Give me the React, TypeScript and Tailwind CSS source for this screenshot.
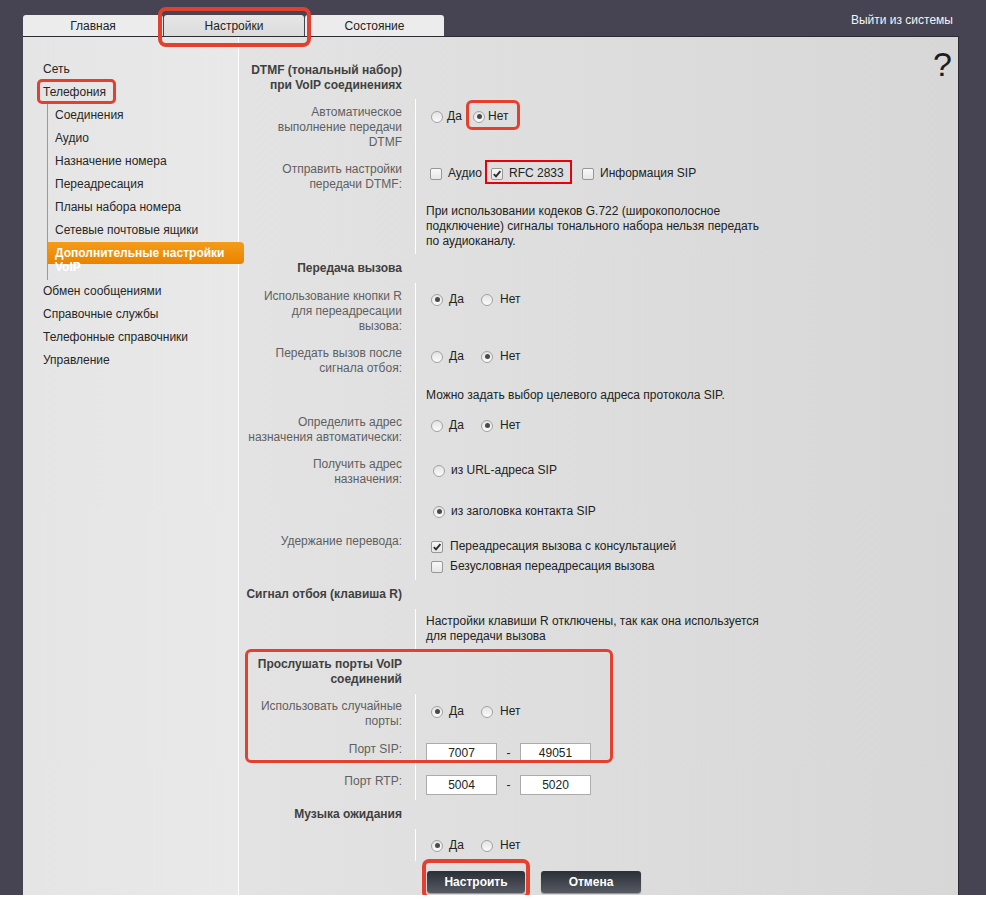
import React from "react";

function Radio({ checked = false }: { checked?: boolean }) {
  return (
    <span className="inline-flex w-[12px] h-[12px] shrink-0 items-center justify-center rounded-full border border-[#a2a2a2] bg-[linear-gradient(#e4e4e4,#fbfbfb)]">
      {checked ? <span className="block w-[5px] h-[5px] rounded-full bg-[#4a4a4a]" /> : null}
    </span>
  );
}

function Check({ checked = false }: { checked?: boolean }) {
  return (
    <span className="inline-flex w-[12px] h-[12px] shrink-0 items-center justify-center rounded-[2px] border border-[#979797] bg-[linear-gradient(#f8f8f8,#e6e6e6)]">
      {checked ? (
        <svg width="10" height="10" viewBox="0 0 10 10">
          <path d="M1.8 5.2 L4 7.4 L8.4 2.2" fill="none" stroke="#2d2d2d" strokeWidth="1.9" />
        </svg>
      ) : null}
    </span>
  );
}

function Row({
  label,
  labelCls = "",
  valueCls = "",
  rowCls = "",
  children,
}: {
  label?: React.ReactNode;
  labelCls?: string;
  valueCls?: string;
  rowCls?: string;
  children?: React.ReactNode;
}) {
  return (
    <div className={`flex ${rowCls}`}>
      <div className={`w-[176px] shrink-0 pr-[13px] text-right text-[#5f5f5f] leading-[15px] whitespace-nowrap ${labelCls}`}>
        {label}
      </div>
      <div className={`flex-1 border-l border-white pl-[10px] text-[#222] leading-[15px] ${valueCls}`}>{children}</div>
    </div>
  );
}

function Header({ children, cls }: { children: React.ReactNode; cls: string }) {
  return (
    <div className={`w-[176px] pr-[13px] text-right font-bold text-[#404040] leading-[15px] whitespace-nowrap ${cls}`}>
      {children}
    </div>
  );
}

function YesNo({ yes }: { yes: boolean }) {
  return (
    <div className="flex items-center h-[15px] ml-[5px]">
      <Radio checked={yes} />
      <span className="ml-[6px] w-[32px]">Да</span>
      <Radio checked={!yes} />
      <span className="ml-[7px]">Нет</span>
    </div>
  );
}

function PortInputs({ a, b }: { a: string; b: string }) {
  return (
    <div className="flex items-center">
      <div className="w-[71px] h-[20px] border border-[#ababab] bg-white text-center leading-[18px] text-[#222]">{a}</div>
      <span className="w-[23px] text-center">-</span>
      <div className="w-[71px] h-[20px] border border-[#ababab] bg-white text-center leading-[18px] text-[#222]">{b}</div>
    </div>
  );
}

export default function App() {
  const sub = ["Соединения", "Аудио", "Назначение номера", "Переадресация", "Планы набора номера", "Сетевые почтовые ящики"];
  const bottom = ["Обмен сообщениями", "Справочные службы", "Телефонные справочники", "Управление"];
  return (
    <div className="relative w-[986px] h-[895px] bg-[#464452] font-['Liberation_Sans',Arial,sans-serif] text-[12px] overflow-hidden">
      {/* top bar */}
      <div className="flex h-[36px] justify-between">
        <div className="flex items-end gap-[1px] pl-[23px]">
          <div className="w-[140px] h-[21px] rounded-t-[3px] bg-[#ececec] flex items-center justify-center text-[#222]">Главная</div>
          <div className="w-[140px] h-[21px] rounded-t-[3px] bg-[linear-gradient(#e6e6e6,#dcdcdc)] flex items-center justify-center text-[#222]">Настройки</div>
          <div className="w-[139px] h-[21px] rounded-t-[3px] bg-[#ececec] flex items-center justify-center text-[#222]">Состояние</div>
        </div>
        <div className="pt-[13px] pr-[33px] leading-[15px] text-[#f4f4f4]">Выйти из системы</div>
      </div>

      {/* panel */}
      <div className="ml-[23px] w-[936px] h-[859px] border-t border-r border-[#2c2b34] flex">
        {/* sidebar */}
        <div className="w-[216px] shrink-0 border-r border-white bg-[linear-gradient(to_right,#e5e5e5,#e9e9e9)] pt-[21px] text-[#262626]">
          <div className="h-[23px] leading-[23px] pl-[20px]">Сеть</div>
          <div className="h-[23px] leading-[23px] pl-[20px]">Телефония</div>
          <div className="ml-[24px] border-l border-[#9a9a9a]">
            {sub.map((s) => (
              <div key={s} className="h-[23px] leading-[23px] pl-[7px]">
                {s}
              </div>
            ))}
            <div className="h-[38px]">
              <div className="relative z-10 w-[196px] h-[22px] rounded-r-[4px] bg-[linear-gradient(#f59c1a,#e98300)] pl-[7px] pt-[4px] leading-[14px] font-bold text-white whitespace-nowrap">
                Дополнительные настройки
                <br />
                VoIP
              </div>
            </div>
          </div>
          {bottom.map((s) => (
            <div key={s} className="h-[23px] leading-[23px] pl-[20px]">
              {s}
            </div>
          ))}
        </div>

        {/* content */}
        <div className="flex-1 flex bg-[linear-gradient(to_right,#e3e3e3,#d7d7d7)]">
          <div className="flex-1">
            <Header cls="pt-[26px] pb-[6px]">
              DTMF (тональный набор)
              <br />
              при VoIP соединениях
            </Header>
            <Row
              label={<>Автоматическое<br />выполнение передачи<br />DTMF</>}
              labelCls="pt-[6px] pb-[6px]"
              valueCls="pt-[10px]"
            >
              <div className="flex items-center h-[15px] ml-[5px]">
                <Radio />
                <span className="ml-[4px] w-[26px]">Да</span>
                <Radio checked />
                <span className="ml-[3px]">Нет</span>
              </div>
            </Row>
            <Row label={<>Отправить настройки<br />передачи DTMF:</>} labelCls="pt-[6px] pb-[6px]" valueCls="pt-[10px]">
              <div className="flex items-center h-[15px] ml-[4px]">
                <Check />
                <span className="ml-[6px] w-[43px]">Аудио</span>
                <Check checked />
                <span className="ml-[6px] w-[73px]">RFC 2833</span>
                <Check />
                <span className="ml-[6px]">Информация SIP</span>
              </div>
            </Row>
            <Row valueCls="pt-[6px] pb-[5px]">
              При использовании кодеков G.722 (широкополосное
              <br />
              подключение) сигналы тонального набора нельзя передать
              <br />
              по аудиоканалу.
            </Row>

            <Header cls="pt-[7px] pb-[7px]">Передача вызова</Header>
            <Row
              label={<>Использование кнопки R<br />для переадресации<br />вызова:</>}
              labelCls="pt-[6px] pb-[6px]"
              valueCls="pt-[9px]"
            >
              <YesNo yes />
            </Row>
            <Row label={<>Передать вызов после<br />сигнала отбоя:</>} labelCls="pt-[6px] pb-[6px]" valueCls="pt-[9px]">
              <YesNo yes={false} />
            </Row>
            <Row valueCls="pt-[6px] pb-[6px]">Можно задать выбор целевого адреса протокола SIP.</Row>
            <Row label={<>Определить адрес<br />назначения автоматически:</>} labelCls="pt-[6px] pb-[6px]" valueCls="pt-[9px]">
              <YesNo yes={false} />
            </Row>
            <Row label={<>Получить адрес<br />назначения:</>} labelCls="pt-[6px]" valueCls="pt-[12px] pb-[9px]">
              <div className="flex items-center h-[15px] ml-[7px]">
                <Radio />
                <span className="ml-[6px]">из URL-адреса SIP</span>
              </div>
              <div className="flex items-center h-[15px] ml-[7px] mt-[26px]">
                <Radio checked />
                <span className="ml-[6px]">из заголовка контакта SIP</span>
              </div>
            </Row>
            <Row label="Удержание перевода:" labelCls="pt-[6px]" valueCls="pt-[11px] pb-[6px]">
              <div className="flex items-center h-[15px] ml-[5px]">
                <Check checked />
                <span className="ml-[7px]">Переадресация вызова с консультацией</span>
              </div>
              <div className="flex items-center h-[15px] ml-[5px] mt-[5px]">
                <Check />
                <span className="ml-[7px]">Безусловная переадресация вызова</span>
              </div>
            </Row>

            <Header cls="pt-[7px] pb-[7px]">Сигнал отбоя (клавиша R)</Header>
            <Row valueCls="pt-[5px] pb-[6px]">
              Настройки клавиши R отключены, так как она используется
              <br />
              для передачи вызова
            </Row>

            <Header cls="pt-[7px] pb-[7px]">
              Прослушать порты VoIP
              <br />
              соединений
            </Header>
            <Row label={<>Использовать случайные<br />порты:</>} labelCls="pt-[5px] pb-[7px]" valueCls="pt-[10px]">
              <YesNo yes />
            </Row>
            <Row label="Порт SIP:" rowCls="h-[32px]" labelCls="pt-[6px]" valueCls="pt-[7px]">
              <PortInputs a="7007" b="49051" />
            </Row>
            <Row label="Порт RTP:" rowCls="h-[32px]" labelCls="pt-[6px]" valueCls="pt-[7px]">
              <PortInputs a="5004" b="5020" />
            </Row>

            <Header cls="pt-[7px] pb-[7px]">Музыка ожидания</Header>
            <Row rowCls="h-[32px]" valueCls="pt-[9px]">
              <YesNo yes />
            </Row>

            <div className="flex gap-[16px] ml-[188px] mt-[10px]">
              <div className="w-[98px] h-[22px] rounded-[3px] bg-[linear-gradient(#2b2f37,#565a63)] shadow-[0_1px_1px_rgba(0,0,0,0.35)] flex items-center justify-center font-bold text-white">
                Настроить
              </div>
              <div className="w-[100px] h-[22px] rounded-[3px] bg-[linear-gradient(#2b2f37,#565a63)] shadow-[0_1px_1px_rgba(0,0,0,0.35)] flex items-center justify-center font-bold text-white">
                Отмена
              </div>
            </div>
          </div>
          <div className="pt-[10px] pr-[6px] text-[34px] leading-[34px] text-[#1e1e1e]">?</div>
        </div>
      </div>

      {/* red annotation boxes */}
      <div className="absolute left-[158px] top-[7px] w-[153px] h-[40px] border-[4px] border-[#e5402f] rounded-[8px]" />
      <div className="absolute left-[37px] top-[79px] w-[79px] h-[25px] border-[3px] border-[#e5402f] rounded-[5px]" />
      <div className="absolute left-[466px] top-[100px] w-[54px] h-[30px] border-[3px] border-[#e5402f] rounded-[6px]" />
      <div className="absolute left-[485px] top-[160px] w-[87px] h-[24px] border-2 border-[#e8000b]" />
      <div className="absolute left-[245px] top-[649px] w-[368px] h-[114px] border-[3px] border-[#e5402f] rounded-[6px]" />
      <div className="absolute left-[422px] top-[859px] w-[108px] h-[40px] border-[4px] border-[#e5402f] rounded-[7px]" />
    </div>
  );
}
